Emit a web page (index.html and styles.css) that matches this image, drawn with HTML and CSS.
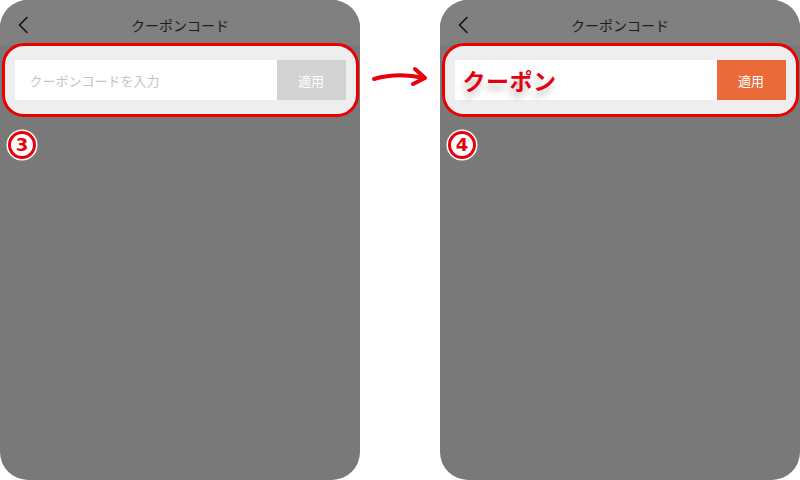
FILE: index.html
```html
<!DOCTYPE html>
<html lang="ja">
<head>
<meta charset="utf-8">
<title>クーポンコード</title>
<link rel="stylesheet" href="styles.css">
</head>
<body>
<div class="stage">
  <section class="phone">
    <header class="bar">
      <svg class="back" width="12" height="18" viewBox="0 0 12 18"><path d="M10 1.5 L2.5 9 L10 16.5" fill="none" stroke="#111" stroke-width="1.6" stroke-linecap="round" stroke-linejoin="round"/></svg>
      <h1 class="title">クーポンコード</h1>
      <span></span>
    </header>
    <div class="panel">
      <div class="field">
        <div class="input placeholder">クーポンコードを入力</div>
        <div class="btn btn-off">適用</div>
      </div>
    </div>
    <div class="step">3</div>
  </section>

  <div class="gap">
    <svg class="arrow" width="64" height="30" viewBox="0 0 64 30"><path d="M6 17 C20 13 38 12 56 16" fill="none" stroke="#e8000b" stroke-width="4" stroke-linecap="round"/><path d="M47 7 L57 16 L45 22" fill="none" stroke="#e8000b" stroke-width="4" stroke-linecap="round" stroke-linejoin="round"/></svg>
  </div>

  <section class="phone">
    <header class="bar">
      <svg class="back" width="12" height="18" viewBox="0 0 12 18"><path d="M10 1.5 L2.5 9 L10 16.5" fill="none" stroke="#111" stroke-width="1.6" stroke-linecap="round" stroke-linejoin="round"/></svg>
      <h1 class="title">クーポンコード</h1>
      <span></span>
    </header>
    <div class="panel">
      <div class="field">
        <div class="input typed">クーポン</div>
        <div class="btn btn-on">適用</div>
      </div>
    </div>
    <div class="step">4</div>
  </section>
</div>
</body>
</html>
```
FILE: styles.css
```css
* { box-sizing: border-box; margin: 0; padding: 0; }
html, body { width: 800px; height: 480px; overflow: hidden; background: #fff; }
body { font-family: "Noto Sans CJK JP", "Noto Sans", sans-serif; }

.stage { display: flex; width: 800px; height: 480px; }

.phone {
  width: 360px;
  height: 480px;
  background: #797979;
  border-radius: 28px;
  overflow: hidden;
  display: flex;
  flex-direction: column;
}

.bar {
  height: 45px;
  background: #808080;
  display: grid;
  grid-template-columns: 40px 1fr 40px;
  align-items: center;
  padding-top: 5px;
}
.back { margin-left: 17px; }
.title {
  font-size: 14px;
  font-weight: 400;
  color: #1c1c1c;
  text-align: center;
  line-height: 1;
}

.panel {
  margin: -2px 1.5px 0;
  height: 74px;
  background: #eeeeee;
  border: 3.5px solid #ea0000;
  border-radius: 22px;
  padding: 14px 10px 0;
}
.field { display: flex; height: 40px; }
.input {
  flex: 1;
  background: #fff;
  display: flex;
  align-items: center;
  padding-left: 15px;
}
.placeholder { font-size: 13px; color: #c4c4c4; }
.typed {
  padding-left: 8px;
  font-size: 23px;
  font-weight: 700;
  color: #e6000f;
  letter-spacing: 0.5px;
  text-shadow: -2px 6px 6px rgba(0,0,0,0.25);
}
.btn {
  width: 69px;
  display: flex;
  align-items: center;
  justify-content: center;
  font-size: 13px;
  color: #fff;
}
.btn-off { background: #d2d2d2; }
.btn-on { background: #ea6a3a; }

.step {
  margin: 14px 0 0 8px;
  width: 28px;
  height: 28px;
  border-radius: 50%;
  background: #fff;
  border: 3px solid #e8000b;
  box-shadow: 0 0 0 1.5px #fff;
  color: #e8000b;
  font-family: "DejaVu Sans", sans-serif;
  font-weight: 700;
  font-size: 18px;
  line-height: 22px;
  text-align: center;
}

.gap {
  width: 80px;
  display: flex;
  justify-content: center;
  padding-top: 62px;
}
.arrow { display: block; }
```
